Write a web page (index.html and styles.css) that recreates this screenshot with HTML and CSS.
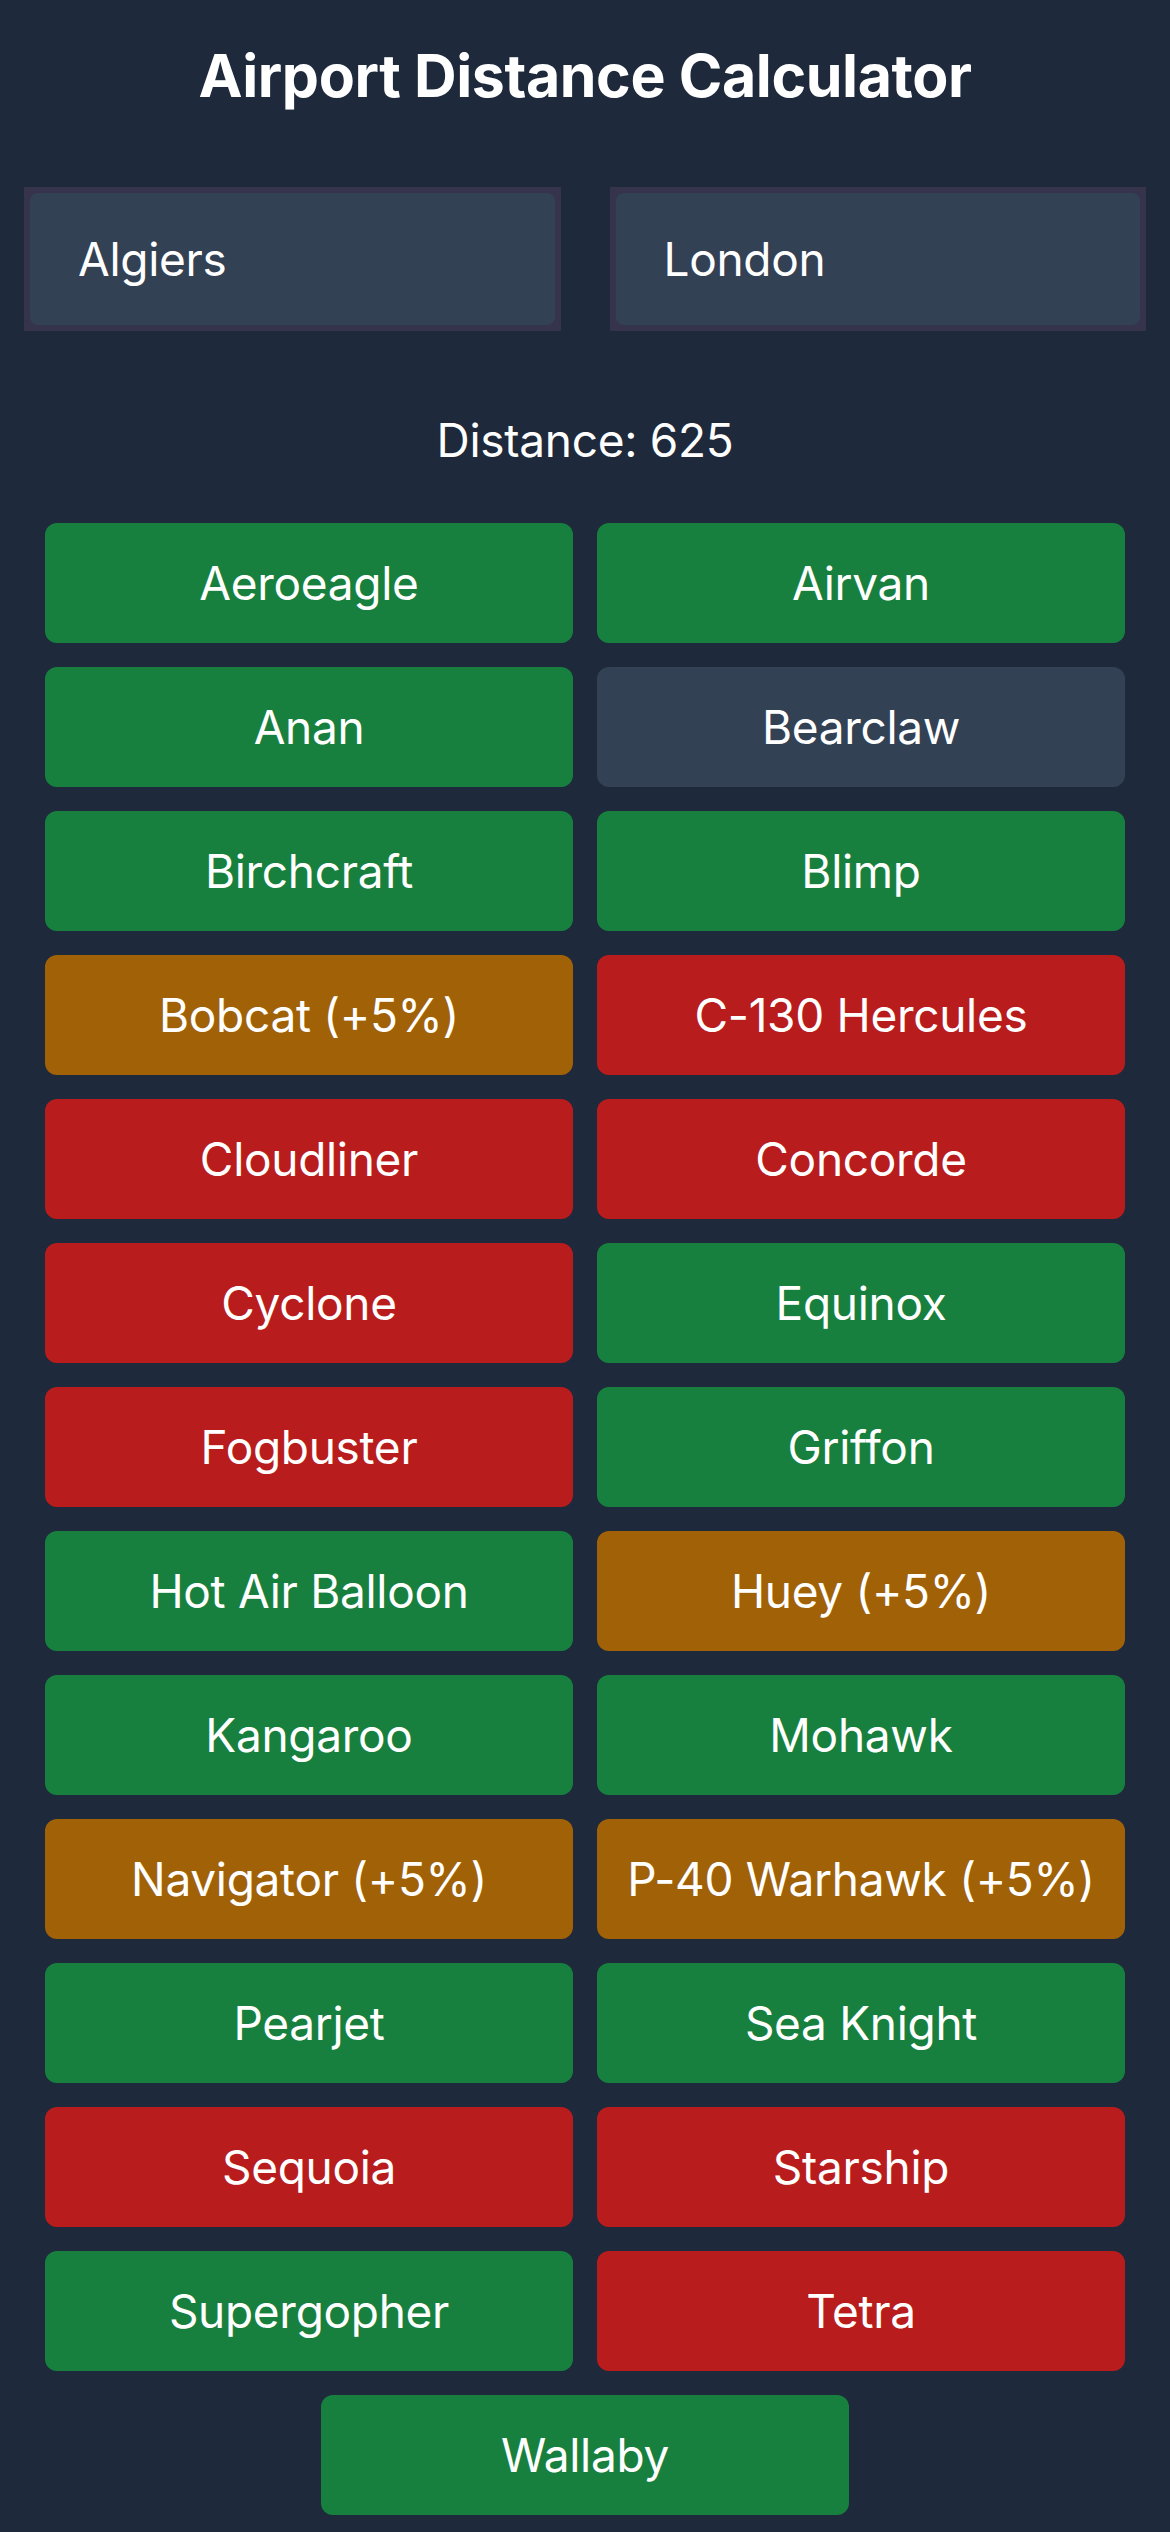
FILE: index.html
```html
<!DOCTYPE html>
<html lang="en">
<head>
<meta charset="utf-8">
<title>Airport Distance Calculator</title>
<link rel="stylesheet" href="styles.css">
</head>
<body>
<main class="app">
  <h1 class="title">Airport Distance Calculator</h1>
  <div class="inputs">
    <div class="field"><div class="field-inner">Algiers</div></div>
    <div class="field"><div class="field-inner">London</div></div>
  </div>
  <p class="distance">Distance: 625</p>
  <div class="planes">
    <div class="plane ok">Aeroeagle</div>
    <div class="plane ok">Airvan</div>
    <div class="plane ok">Anan</div>
    <div class="plane none">Bearclaw</div>
    <div class="plane ok">Birchcraft</div>
    <div class="plane ok">Blimp</div>
    <div class="plane warn">Bobcat (+5%)</div>
    <div class="plane bad">C-130 Hercules</div>
    <div class="plane bad">Cloudliner</div>
    <div class="plane bad">Concorde</div>
    <div class="plane bad">Cyclone</div>
    <div class="plane ok">Equinox</div>
    <div class="plane bad">Fogbuster</div>
    <div class="plane ok">Griffon</div>
    <div class="plane ok">Hot Air Balloon</div>
    <div class="plane warn">Huey (+5%)</div>
    <div class="plane ok">Kangaroo</div>
    <div class="plane ok">Mohawk</div>
    <div class="plane warn">Navigator (+5%)</div>
    <div class="plane warn">P-40 Warhawk (+5%)</div>
    <div class="plane ok">Pearjet</div>
    <div class="plane ok">Sea Knight</div>
    <div class="plane bad">Sequoia</div>
    <div class="plane bad">Starship</div>
    <div class="plane ok">Supergopher</div>
    <div class="plane bad">Tetra</div>
    <div class="plane ok">Wallaby</div>
  </div>
</main>
</body>
</html>
```
FILE: styles.css
```css
html, body {
  margin: 0;
  padding: 0;
  background: #1e293b;
}
body {
  font-family: Inter, "Noto Sans", "Liberation Sans", sans-serif;
  color: #ffffff;
  min-height: 2532px;
}
.app {
  display: flex;
  flex-direction: column;
}
.title {
  margin: 41px 0 0;
  font-size: 59px;
  font-weight: 700;
  line-height: 70px;
  text-align: center;
  letter-spacing: -0.4px;
}
.inputs {
  margin-top: 76px;
  padding: 0 24px;
  display: grid;
  grid-template-columns: 1fr 1fr;
  column-gap: 49px;
}
.field {
  background: #36344c;
  padding: 6px;
  height: 144px;
  box-sizing: border-box;
  display: flex;
}
.field-inner {
  flex: 1;
  background: #334155;
  border-radius: 8px;
  display: flex;
  align-items: center;
  padding-left: 48px;
  font-size: 46px;
  letter-spacing: -0.3px;
}
.distance {
  margin: 81px 0 0;
  font-size: 46px;
  line-height: 56px;
  text-align: center;
  letter-spacing: -0.3px;
}
.planes {
  margin-top: 55px;
  padding: 0 45px;
  display: flex;
  flex-wrap: wrap;
  justify-content: center;
  gap: 24px;
}
.plane {
  width: calc((100% - 24px) / 2);
  height: 120px;
  border-radius: 12px;
  display: flex;
  align-items: center;
  justify-content: center;
  font-size: 46px;
  letter-spacing: -0.3px;
}
.ok { background: #18803e; }
.bad { background: #b91c1c; }
.warn { background: #a16207; }
.none { background: #334155; }
```
